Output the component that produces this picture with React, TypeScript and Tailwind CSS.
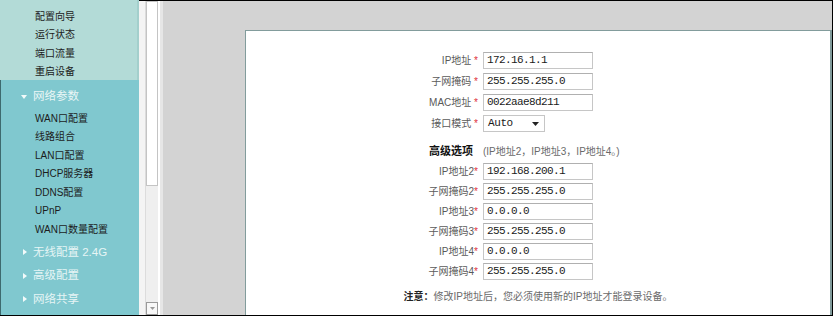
import React from 'react';

const cjk = { fontFamily: '"Liberation Sans", "Noto Sans CJK SC", sans-serif' };
const mono = { fontFamily: '"Liberation Mono", "Noto Sans CJK SC", monospace' };

const topItems = ['配置向导', '运行状态', '端口流量', '重启设备'];
const netItems = ['WAN口配置', '线路组合', 'LAN口配置', 'DHCP服务器', 'DDNS配置', 'UPnP', 'WAN口数量配置'];
const sections = ['无线配置 2.4G', '高级配置', '网络共享'];

const Tri: React.FC<{ down?: boolean }> = ({ down }) => (
  <svg width="6" height="6" viewBox="0 0 6 6" className="shrink-0">
    {down ? <path d="M0 1 L6 1 L3 5 Z" fill="#f2fafa" /> : <path d="M1 0 L5 3 L1 6 Z" fill="#f2fafa" />}
  </svg>
);

const Sidebar = () => (
  <aside className="w-[139px] h-full flex flex-col" style={cjk}>
    <div className="h-[80px] bg-[#b3dbd7] border-r-2 border-[#a3cfcc] pt-[7px]">
      {topItems.map((t) => (
        <div key={t} className="h-[18.5px] flex items-center pl-[35px] text-[10px] text-[#1c1c1c]">
          {t}
        </div>
      ))}
    </div>
    <div className="flex-1 bg-[#80c8cf] border-l border-[#3d6a6e] pt-[5px]">
      <div className="h-[24px] flex items-center gap-[6px] pl-[20px] text-[11.5px] text-[#eaf6f6]">
        <Tri down />
        <span>网络参数</span>
      </div>
      {netItems.map((t) => (
        <div key={t} className="h-[18.5px] flex items-center pl-[34px] text-[10px] text-[#1c1c1c]">
          {t}
        </div>
      ))}
      <div className="mt-[2px]">
        {sections.map((t) => (
          <div key={t} className="h-[23.5px] flex items-center gap-[5px] pl-[21px] text-[11.5px] text-[#e6f5f5]">
            <Tri />
            <span>{t}</span>
          </div>
        ))}
      </div>
    </div>
  </aside>
);

const Scrollbar = () => (
  <div className="w-[13px] h-full flex flex-col bg-[#efefef] border-l border-[#dcdcdc]">
    <div className="h-[185px] bg-white border border-[#c4c4c4]" />
    <div className="flex-1" />
    <div className="h-[13px] bg-[#f8f8f8] border border-[#9a9a9a] flex items-center justify-center">
      <svg width="5" height="3" viewBox="0 0 5 3">
        <path d="M0 0 L5 0 L2.5 3 Z" fill="#9a9a9a" />
      </svg>
    </div>
  </div>
);

const Field: React.FC<{ label: string; value: string; spaced?: boolean; h: string }> = ({ label, value, spaced, h }) => (
  <div className={`${h} flex items-center`}>
    <div className="w-[232px] text-right text-[10px] text-[#5a5a5a]" style={cjk}>
      {label}
      {spaced ? ' ' : ''}
      <span className="text-[#e0303a]">*</span>
    </div>
    <div
      className="ml-[5px] w-[110px] h-[17px] border border-[#c6c6c6] border-t-[#b0b0b0] bg-white flex items-center pl-[3px] text-[11px] tracking-[-0.6px] text-[#1a1a1a]"
      style={mono}
    >
      {value}
    </div>
  </div>
);

const Panel = () => (
  <div className="h-full bg-white border-l border-t border-r-2 border-[#829c9c] pt-[19px]">
    <Field h="h-[21px]" spaced label="IP地址" value="172.16.1.1" />
    <Field h="h-[21px]" spaced label="子网掩码" value="255.255.255.0" />
    <Field h="h-[21px]" spaced label="MAC地址" value="0022aae8d211" />
    <div className="h-[21px] flex items-center">
      <div className="w-[232px] text-right text-[10px] text-[#5a5a5a]" style={cjk}>
        接口模式 <span className="text-[#e0303a]">*</span>
      </div>
      <div
        className="ml-[5px] w-[62px] h-[17px] border border-[#c6c6c6] bg-white flex items-center justify-between pl-[4px] pr-[5px] text-[11px] tracking-[-0.4px] text-[#1a1a1a]"
        style={mono}
      >
        <span>Auto</span>
        <svg width="7" height="4" viewBox="0 0 7 4">
          <path d="M0 0 L7 0 L3.5 4 Z" fill="#222" />
        </svg>
      </div>
    </div>
    <div className="mt-[7px] h-[20px] flex items-center" style={cjk}>
      <div className="w-[227px] text-right text-[11px] font-bold text-[#111]">高级选项</div>
      <div className="ml-[10px] text-[10px] text-[#6a6a6a]">(IP地址2，IP地址3，IP地址4。)</div>
    </div>
    <Field h="h-[20px]" label="IP地址2" value="192.168.200.1" />
    <Field h="h-[20px]" label="子网掩码2" value="255.255.255.0" />
    <Field h="h-[20px]" label="IP地址3" value="0.0.0.0" />
    <Field h="h-[20px]" label="子网掩码3" value="255.255.255.0" />
    <Field h="h-[20px]" label="IP地址4" value="0.0.0.0" />
    <Field h="h-[20px]" label="子网掩码4" value="255.255.255.0" />
    <div className="mt-[5px] h-[20px] flex items-center justify-center text-[10px] text-[#6a6a6a]" style={cjk}>
      <span className="font-bold text-[#222]">注意：</span>
      <span>修改IP地址后，您必须使用新的IP地址才能登录设备。</span>
    </div>
  </div>
);

export default function App() {
  return (
    <div className="w-[838px] h-[320px] bg-white overflow-hidden">
      <div className="w-[833px] h-[316px] flex border-b border-black">
        <Sidebar />
        <div className="flex-1 h-full flex border-t border-r border-black">
          <div className="w-[6px] h-full bg-[#f4f4f4]" />
          <Scrollbar />
          <div className="w-[2px] h-full bg-white" />
          <div className="flex-1 h-full bg-[#d3d3d3] border-l-[3px] border-[#e6e6e6] pl-[82px] pt-[29px]">
            <Panel />
          </div>
        </div>
      </div>
    </div>
  );
}
